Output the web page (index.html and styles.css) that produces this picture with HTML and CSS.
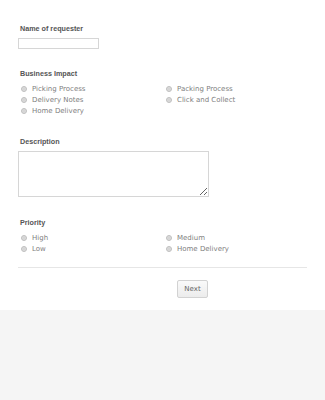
FILE: index.html
```html
<!DOCTYPE html>
<html lang="en">
<head>
    <meta charset="UTF-8">
    <title>Request Form</title>
    <link rel="stylesheet" href="styles.css">
</head>
<body>
    <div class="form">
        <div class="field">
            <div class="label">Name of requester</div>
            <input type="text" class="text-input">
        </div>

        <div class="field">
            <div class="label">Business Impact</div>
            <div class="options">
                <div class="option"><span class="radio"></span>Picking Process</div>
                <div class="option"><span class="radio"></span>Packing Process</div>
                <div class="option"><span class="radio"></span>Delivery Notes</div>
                <div class="option"><span class="radio"></span>Click and Collect</div>
                <div class="option"><span class="radio"></span>Home Delivery</div>
            </div>
        </div>

        <div class="field wide-gap">
            <div class="label">Description</div>
            <textarea class="text-area"></textarea>
        </div>

        <div class="field wide-gap">
            <div class="label">Priority</div>
            <div class="options">
                <div class="option"><span class="radio"></span>High</div>
                <div class="option"><span class="radio"></span>Medium</div>
                <div class="option"><span class="radio"></span>Low</div>
                <div class="option"><span class="radio"></span>Home Delivery</div>
            </div>
        </div>

        <div class="divider"></div>

        <div class="buttons">
            <button class="next-btn">Next</button>
        </div>
    </div>
</body>
</html>
```

FILE: styles.css
```css
body {
    margin: 0;
    background: #f5f5f5;
    font-family: 'Liberation Sans', Arial, sans-serif;
}
.form {
    background: #ffffff;
    padding: 24px 18px 12px 18px;
}
.field + .field {
    margin-top: 20px;
}
.field.wide-gap {
    margin-top: 21px;
}
.label {
    font-size: 7.2px;
    font-weight: bold;
    color: #555;
    line-height: 10px;
    padding-left: 2px;
    margin-bottom: 4px;
}
.text-input {
    display: block;
    box-sizing: border-box;
    width: 81px;
    height: 11px;
    margin: 0;
    padding: 0;
    border: 1px solid #d6d6d6;
    background: #fff;
}
.options {
    display: grid;
    grid-template-columns: 145px 145px;
}
.option {
    display: flex;
    align-items: center;
    height: 11px;
    font-family: 'DejaVu Sans', Verdana, sans-serif;
    font-size: 7px;
    color: #808080;
    padding-left: 3px;
}
.radio {
    box-sizing: border-box;
    width: 6px;
    height: 6px;
    border-radius: 50%;
    border: 1px solid #bdbdbd;
    background: radial-gradient(circle, #d6d6d6 40%, #ececec 100%);
    margin-right: 5px;
    flex-shrink: 0;
}
.text-area {
    display: block;
    box-sizing: border-box;
    width: 191px;
    height: 46px;
    margin: 0;
    border: 1px solid #d6d6d6;
    background: #fff;
}
.divider {
    border-top: 1px solid #e6e6e6;
    margin-top: 13px;
    width: 289px;
}
.buttons {
    padding: 12px 0 0 159px;
}
.next-btn {
    display: block;
    width: 31px;
    height: 18px;
    padding: 0;
    border: 1px solid #d2d2d2;
    border-radius: 2px;
    background: linear-gradient(#fafafa, #ececec);
    font-family: 'DejaVu Sans', Verdana, sans-serif;
    font-size: 7px;
    color: #666;
}
```
